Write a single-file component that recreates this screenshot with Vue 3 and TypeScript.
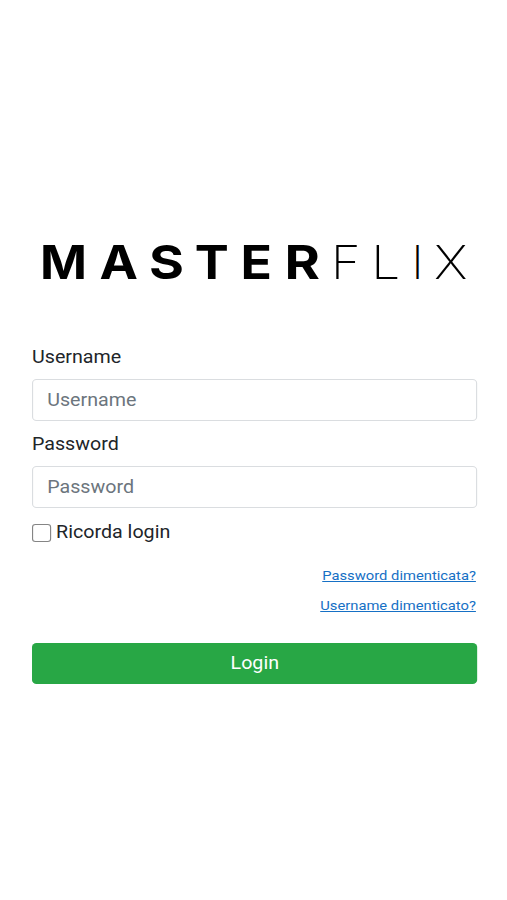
<script setup lang="ts">
import { ref } from 'vue'

interface Glyph { char: string; x: number; width: number; light?: boolean }

const glyphs: Glyph[] = [
  { char: 'M', x: 40, width: 47 },
  { char: 'A', x: 99.6, width: 38.5 },
  { char: 'S', x: 149, width: 35 },
  { char: 'T', x: 194.8, width: 34 },
  { char: 'E', x: 240.6, width: 31.5 },
  { char: 'R', x: 284.4, width: 35.5 },
  { char: 'F', x: 331, width: 29.5, light: true },
  { char: 'L', x: 371.2, width: 29, light: true },
  { char: 'I', x: 411.2, width: 12.5, light: true },
  { char: 'X', x: 434, width: 33.5, light: true },
]

const username = ref('')
const password = ref('')
const remember = ref(false)
</script>

<template>
  <main class="page">
    <svg class="logo" viewBox="0 0 507 60" role="img" aria-label="MASTERFLIX">
      <text
        v-for="g in glyphs"
        :key="g.char"
        :class="{ light: g.light }"
        :x="g.x"
        y="49.3"
        :textLength="g.width"
        lengthAdjust="spacingAndGlyphs"
      >{{ g.char }}</text>
    </svg>
    <form class="form" @submit.prevent>
      <label class="label" for="username">Username</label>
      <input id="username" v-model="username" class="field" type="text" placeholder="Username" />
      <label class="label" for="password">Password</label>
      <input id="password" v-model="password" class="field" type="password" placeholder="Password" />
      <label class="remember">
        <input v-model="remember" class="check" type="checkbox" />
        <span>Ricorda login</span>
      </label>
      <nav class="links">
        <a href="#">Password dimenticata?</a>
        <a href="#">Username dimenticato?</a>
      </nav>
      <button class="submit" type="submit">Login</button>
    </form>
  </main>
</template>

<style>
body { margin: 0; background: #fff; }
</style>

<style scoped>
.page {
  box-sizing: border-box;
  width: 507px;
  height: 900px;
  padding-top: 230px;
  overflow: hidden;
  background: #fff;
  color: #212529;
  font-family: Roboto, "Liberation Sans", sans-serif;
}
.logo { display: block; width: 507px; height: 60px; }
.logo text { font: 650 47px Inter, sans-serif; fill: #000; }
.logo text.light { font-weight: 200; }
.form {
  display: flex;
  flex-direction: column;
  width: 395.4px;
  margin: 54px 0 0 31.5px;
  transform: scaleX(1.127);
  transform-origin: left top;
  font-size: 17.46px;
}
.label { height: 35px; line-height: 26px; }
.field {
  box-sizing: border-box;
  width: 100%;
  height: 42px;
  margin: 0 0 10px;
  padding: 0 12.5px 1px;
  border: 1px solid #dadde0;
  border-radius: 4px;
  outline: none;
  background: #fff;
  color: #495057;
  font: inherit;
}
.field::placeholder { color: #6c757d; opacity: 1; }
.remember { display: flex; height: 27px; line-height: 28px; }
.check {
  appearance: none;
  box-sizing: border-box;
  width: 17.4px;
  height: 18px;
  margin: 6px 4px 0 0;
  border: 1.3px solid #858585;
  border-radius: 3px;
}
.check:checked { background: #0069d9; }
.links {
  display: flex;
  flex-direction: column;
  align-items: flex-end;
  margin: 16px 1.5px 0 0;
  font-size: 13.1px;
  line-height: 30px;
}
.links a { color: #1670c5; text-decoration: underline; }
.submit {
  height: 41px;
  margin: 22px 0 0;
  padding: 0 0 1px;
  border: 0;
  border-radius: 4px;
  background: #28a745;
  color: #fff;
  font: inherit;
}
</style>
